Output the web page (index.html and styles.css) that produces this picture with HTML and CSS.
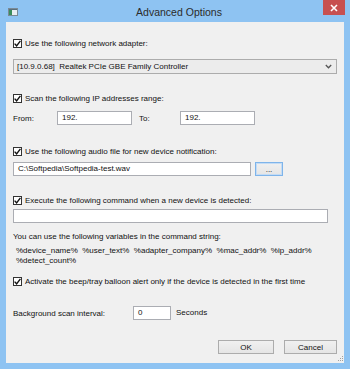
FILE: index.html
```html
<!DOCTYPE html>
<html lang="en">
<head>
  <meta charset="UTF-8" />
  <title>Advanced Options</title>
  <link rel="stylesheet" href="styles.css">
</head>
<body>
  <div class="window">
    <!-- Title bar -->
    <div class="titlebar">
      <svg class="app-icon" width="10" height="8" viewBox="0 0 10 8">
        <rect x="0.5" y="0.5" width="9" height="7" fill="#e8eef2" stroke="#7a8a96"/>
        <rect x="1" y="2" width="3" height="5" fill="#3a8c5c"/>
        <rect x="1" y="1" width="8" height="1" fill="#5b6f7c"/>
      </svg>
      <div class="title">Advanced Options</div>
      <div class="close">
        <svg width="8" height="8" viewBox="0 0 8 8">
          <path d="M1 1 L7 7 M7 1 L1 7" stroke="#fff" stroke-width="1.6"/>
        </svg>
      </div>
    </div>

    <!-- Client area -->
    <div class="client">
      <div class="check-row r1">
        <span class="box"><svg width="7" height="7" viewBox="0 0 7 7"><path d="M0.6 3.6 L2.6 5.8 L6.4 0.8" fill="none" stroke="#111" stroke-width="1.4"/></svg></span>
        <span>Use the following network adapter:</span>
      </div>
      <div class="combo">
        <span class="combo-text">[10.9.0.68]  Realtek PCIe GBE Family Controller</span>
        <svg width="7" height="5" viewBox="0 0 7 5"><path d="M0.8 1 L3.5 3.8 L6.2 1" fill="none" stroke="#555" stroke-width="1.3"/></svg>
      </div>

      <div class="check-row r2">
        <span class="box"><svg width="7" height="7" viewBox="0 0 7 7"><path d="M0.6 3.6 L2.6 5.8 L6.4 0.8" fill="none" stroke="#111" stroke-width="1.4"/></svg></span>
        <span>Scan the following IP addresses range:</span>
      </div>
      <div class="range-row">
        <span class="from-label">From:</span>
        <div class="field ip">192.</div>
        <span class="to-label">To:</span>
        <div class="field ip">192.</div>
      </div>

      <div class="check-row r3">
        <span class="box"><svg width="7" height="7" viewBox="0 0 7 7"><path d="M0.6 3.6 L2.6 5.8 L6.4 0.8" fill="none" stroke="#111" stroke-width="1.4"/></svg></span>
        <span>Use the following audio file for new device notification:</span>
      </div>
      <div class="audio-row">
        <div class="field audio">C:\Softpedia\Softpedia-test.wav</div>
        <div class="btn browse">...</div>
      </div>

      <div class="check-row r4">
        <span class="box"><svg width="7" height="7" viewBox="0 0 7 7"><path d="M0.6 3.6 L2.6 5.8 L6.4 0.8" fill="none" stroke="#111" stroke-width="1.4"/></svg></span>
        <span>Execute the following command when a new device is detected:</span>
      </div>
      <div class="field command"></div>

      <div class="hint">You can use the following variables in the command string:</div>
      <div class="vars">%device_name%  %user_text%  %adapter_company%  %mac_addr%  %ip_addr%
%detect_count%</div>

      <div class="check-row r5">
        <span class="box"><svg width="7" height="7" viewBox="0 0 7 7"><path d="M0.6 3.6 L2.6 5.8 L6.4 0.8" fill="none" stroke="#111" stroke-width="1.4"/></svg></span>
        <span>Activate the beep/tray balloon alert only if the device is detected in the first time</span>
      </div>

      <div class="interval-row">
        <span class="interval-label">Background scan interval:</span>
        <div class="field interval">0</div>
        <span class="seconds">Seconds</span>
      </div>

      <div class="buttons">
        <div class="btn ok">OK</div>
        <div class="btn cancel">Cancel</div>
      </div>

      <svg class="grip" width="7" height="7" viewBox="0 0 7 7">
        <rect x="5" y="1" width="1" height="1" fill="#a0a0a0"/>
        <rect x="3" y="3" width="1" height="1" fill="#a0a0a0"/>
        <rect x="5" y="3" width="1" height="1" fill="#a0a0a0"/>
        <rect x="1" y="5" width="1" height="1" fill="#a0a0a0"/>
        <rect x="3" y="5" width="1" height="1" fill="#a0a0a0"/>
        <rect x="5" y="5" width="1" height="1" fill="#a0a0a0"/>
      </svg>
    </div>
  </div>
</body>
</html>
```

FILE: styles.css
```css
* {
  box-sizing: border-box;
}

body {
  margin: 0;
  font-family: "Liberation Sans", Arial, sans-serif;
  font-size: 8px;
  color: #111;
}

.window {
  width: 350px;
  height: 369px;
  background: #8ec3f2;
  padding: 0 6px 6px 6px;
  display: flex;
  flex-direction: column;
}

/* Title bar */
.titlebar {
  height: 22px;
  display: flex;
  align-items: center;
  position: relative;
}

.app-icon {
  margin-left: 2px;
  margin-top: 1px;
}

.title {
  flex: 1;
  text-align: center;
  font-size: 10.5px;
  color: #2b2b2b;
  margin-top: 1px;
  margin-right: 4px;
}

.close {
  position: absolute;
  right: -1px;
  top: 0;
  width: 22px;
  height: 15px;
  background: #c75050;
  display: flex;
  align-items: center;
  justify-content: center;
}

/* Client area */
.client {
  flex: 1;
  background: #f0f0f0;
  padding: 17px 7px 0 7px;
  position: relative;
}

.check-row {
  display: flex;
  align-items: center;
  height: 9px;
  line-height: 9px;
  white-space: nowrap;
}

.box {
  width: 9px;
  height: 9px;
  border: 1px solid #333;
  background: #fff;
  display: flex;
  align-items: center;
  justify-content: center;
  margin-right: 3px;
  flex: none;
}

.r2 { margin-top: 20px; }
.r3 { margin-top: 22px; }
.r4 { margin-top: 20px; }
.r5 { margin-top: 11px; }

.combo {
  margin-top: 11px;
  height: 15px;
  border: 1px solid #acacac;
  background: #ececec;
  display: flex;
  align-items: center;
  justify-content: space-between;
  padding: 0 4px 0 3px;
}

.combo-text {
  white-space: pre;
}

.field {
  height: 14px;
  border: 1px solid #abadb3;
  background: #fff;
  padding: 0 4px;
  line-height: 12px;
  white-space: nowrap;
}

.range-row {
  margin-top: 8px;
  display: flex;
  align-items: center;
}

.from-label {
  width: 44px;
}

.ip {
  width: 75px;
}

.to-label {
  margin-left: 7px;
  width: 41px;
}

.audio-row {
  margin-top: 6px;
  display: flex;
  gap: 4px;
}

.audio {
  width: 238px;
}

.btn {
  height: 14px;
  border: 1px solid #acacac;
  background: linear-gradient(#f0f0f0, #e5e5e5);
  display: flex;
  align-items: center;
  justify-content: center;
}

.browse {
  width: 28px;
  border-color: #7eb4ea;
  box-shadow: inset 0 0 0 1px #c4dcf5;
}

.command {
  margin-top: 4px;
  width: 315px;
}

.hint {
  margin-top: 9px;
  line-height: 10px;
}

.vars {
  margin-top: 4px;
  padding-left: 3px;
  line-height: 10px;
  white-space: pre;
}

.interval-row {
  margin-top: 20px;
  display: flex;
  align-items: center;
}

.interval-label {
  width: 120px;
}

.interval {
  width: 38px;
}

.seconds {
  margin-left: 5px;
  margin-top: -2px;
}

.buttons {
  margin-top: 20px;
  display: flex;
  justify-content: flex-end;
  gap: 10px;
}

.ok {
  width: 56px;
}

.cancel {
  width: 53px;
}

.grip {
  position: absolute;
  right: 0;
  bottom: 1px;
}
```
